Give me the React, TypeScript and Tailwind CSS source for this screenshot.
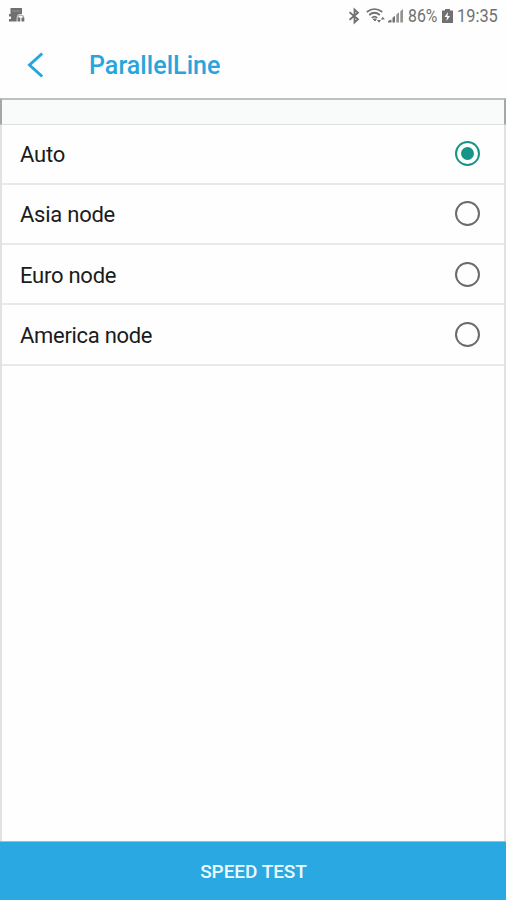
const nodes = [
  { label: "Auto", row: "h-[60px]", text: "mt-0.5 tracking-[-.2px]", radio: "mb-px" },
  { label: "Asia node", row: "h-[60px]", text: "mt-0.5 tracking-[-.25px]", radio: "mb-px" },
  { label: "Euro node", row: "h-[60px]", text: "mt-1 tracking-[-.25px]", radio: "" },
  { label: "America node", row: "h-[61px]", text: "mt-0.5 tracking-[-.3px]", radio: "" },
];

function Radio({ checked, className }: { checked: boolean; className: string }) {
  return (
    <span
      role="radio"
      aria-checked={checked}
      className={
        "flex size-[25px] items-center justify-center rounded-full border-2 " +
        (checked ? "border-[#159587] " : "border-[#6b6b6b] ") +
        className
      }
    >
      {checked && <span className="size-[13px] rounded-full bg-[#159587]" />}
    </span>
  );
}

function StatusBar() {
  return (
    <div className="flex h-8 shrink-0 items-center justify-between pr-2 pl-[9px] text-[#707070]">
      <svg width="17" height="17" viewBox="0 0 17 17" fill="currentColor">
        <path d="M1.5 0h11.5v6.5L8 9v4.5H0V11h2V8.5H0V6h1.5z" />
        <path d="M3.5 3h7.5" stroke="#929292" />
        <path d="M7.7 14V10.5Q7.7 6 11.5 6t4 4.5V14z" fill="#fefefe" />
        <path d="M8.7 10Q9 7.2 11.6 7.2T14.8 10" fill="none" stroke="currentColor" strokeWidth="1.2" opacity=".55" />
        <rect x="8.5" y="9.5" width="2.8" height="4" rx=".6" />
        <rect x="12.5" y="9.5" width="2.8" height="4" rx=".6" />
      </svg>
      <div className="flex items-center">
        <svg width="14" height="18" viewBox="0 0 14 18" fill="none" stroke="currentColor" strokeWidth="1.8">
          <path d="M.5 5.2l8.5 7L5.5 15.5v-13L9 5.8l-8.5 7" />
        </svg>
        <svg className="ml-[3px]" width="22" height="18" viewBox="0 0 22 18" fill="none" stroke="currentColor">
          <path d="M.8 5Q8.5-1 16.2 5M3.2 8Q8.5 3.5 13.8 8M5.7 11Q8.5 8.3 11.3 11" strokeWidth="1.7" />
          <path d="M7.3 12h3L9 14z" fill="currentColor" />
          <path d="M11 13h4l-2 2.8zM14.8 12.5h4l-2-2.8z" fill="currentColor" stroke="none" />
        </svg>
        <svg width="17" height="16" viewBox="0 0 17 16" fill="currentColor">
          <path d="M0 14.5V13l3.5-1.5v3zM4.5 14.5V9.7L7 7.7v6.8z" />
          <path d="M8.3 14.5V6.5L11 4.3v10.2zM12.3 14.5V3.2L15 1v13.5z" opacity=".75" />
        </svg>
        <span className="ml-[3px] w-[31px] origin-left scale-x-[.88] text-[18px] leading-5 whitespace-nowrap">86%</span>
        <svg className="ml-[3px]" width="11" height="16" viewBox="0 0 11 16">
          <path d="M3 1h5v1.5h3V15H0V2.5h3z" fill="currentColor" />
          <path d="M6 4L2.5 9H5l-.5 4L8 8H5.5z" fill="#fff" />
        </svg>
        <span className="ml-[4px] w-[41px] origin-left scale-x-[.91] text-[18px] leading-5">19:35</span>
      </div>
    </div>
  );
}

export default function App() {
  return (
    <main className="flex h-[900px] w-[506px] flex-col bg-[#fefefe] font-['Roboto',sans-serif] text-[#1b1b1b]">
      <StatusBar />
      <header className="flex h-[66px] shrink-0 items-center">
        <button aria-label="Back" className="ml-[26px]">
          <svg width="19" height="28" viewBox="0 0 19 28" fill="none" stroke="#28a5dc" strokeWidth="3">
            <path d="M16.2 2.5L3.5 14l12.7 11.5" />
          </svg>
        </button>
        <h1 className="mt-0.5 ml-11 text-[25px] leading-8 font-medium tracking-[.05px] text-[#28a5dc]">ParallelLine</h1>
      </header>
      <div className="h-[27px] shrink-0 border-x-2 border-t-2 border-b border-x-[#a5a7a7] border-t-[#bebfbf] border-b-[#dce0e0] bg-[#f9fbfa]" />
      <section className="flex-1 border-x-2 border-[#e2e2e2]" role="radiogroup">
        {nodes.map(({ label, row, text, radio }, index) => (
          <div
            key={label}
            className={"flex items-center justify-between border-b-2 border-[#e9e9e9] pr-6 pl-[18px] " + row}
          >
            <span className={"text-[22px] leading-7 " + text}>{label}</span>
            <Radio checked={index === 0} className={radio} />
          </div>
        ))}
      </section>
      <button className="h-[59px] shrink-0 border-t border-[#83c5e5] bg-[#29a8e1] pt-[3px] pl-px text-center text-[19px] font-medium tracking-[-.05px] text-[#eefaff]">
        SPEED TEST
      </button>
    </main>
  );
}
